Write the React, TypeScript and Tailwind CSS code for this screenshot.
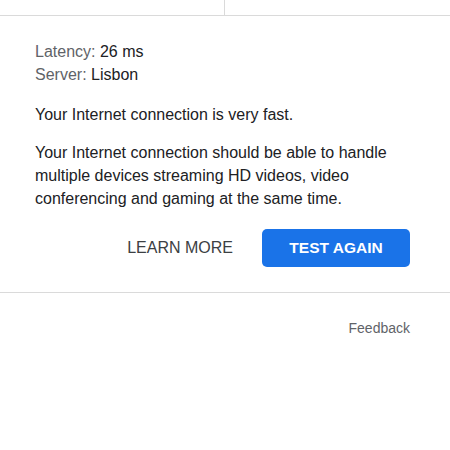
export default function App() {
  return (
    <div className="w-[450px] h-[450px] bg-white overflow-hidden" style={{ fontFamily: '"Liberation Sans", Arial, sans-serif' }}>
      <div className="flex h-[16px] border-b border-[#dadada]">
        <div className="w-[225px] border-r border-[#dadada]" />
        <div className="flex-1" />
      </div>
      <div className="pl-[35px] pr-[40px] pt-[24px]">
        <div className="text-[16px] leading-[23px]">
          <div><span className="text-[#5f6368]">Latency:</span> <span className="text-[#202124]">26 ms</span></div>
          <div><span className="text-[#5f6368]">Server:</span> <span className="text-[#202124]">Lisbon</span></div>
        </div>
        <p className="mt-[17px] text-[16px] leading-[23px] text-[#202124]">Your Internet connection is very fast.</p>
        <p className="mt-[15px] text-[16px] leading-[23px] text-[#202124] pr-[10px]">
          Your Internet connection should be able to handle multiple devices streaming HD videos, video conferencing and gaming at the same time.
        </p>
        <div className="flex justify-end items-center mt-[19px] gap-[29px]">
          <button className="text-[16px] text-[#3c4043]">LEARN MORE</button>
          <button className="w-[148px] h-[38px] rounded-[5px] bg-[#1a73e8] text-white text-[15.5px] font-bold">TEST AGAIN</button>
        </div>
      </div>
      <div className="mt-[25px] border-t border-[#dadada]" />
      <div className="flex justify-end px-[40px] pt-[25px]">
        <span className="text-[14px] text-[#5f6368]">Feedback</span>
      </div>
    </div>
  );
}
